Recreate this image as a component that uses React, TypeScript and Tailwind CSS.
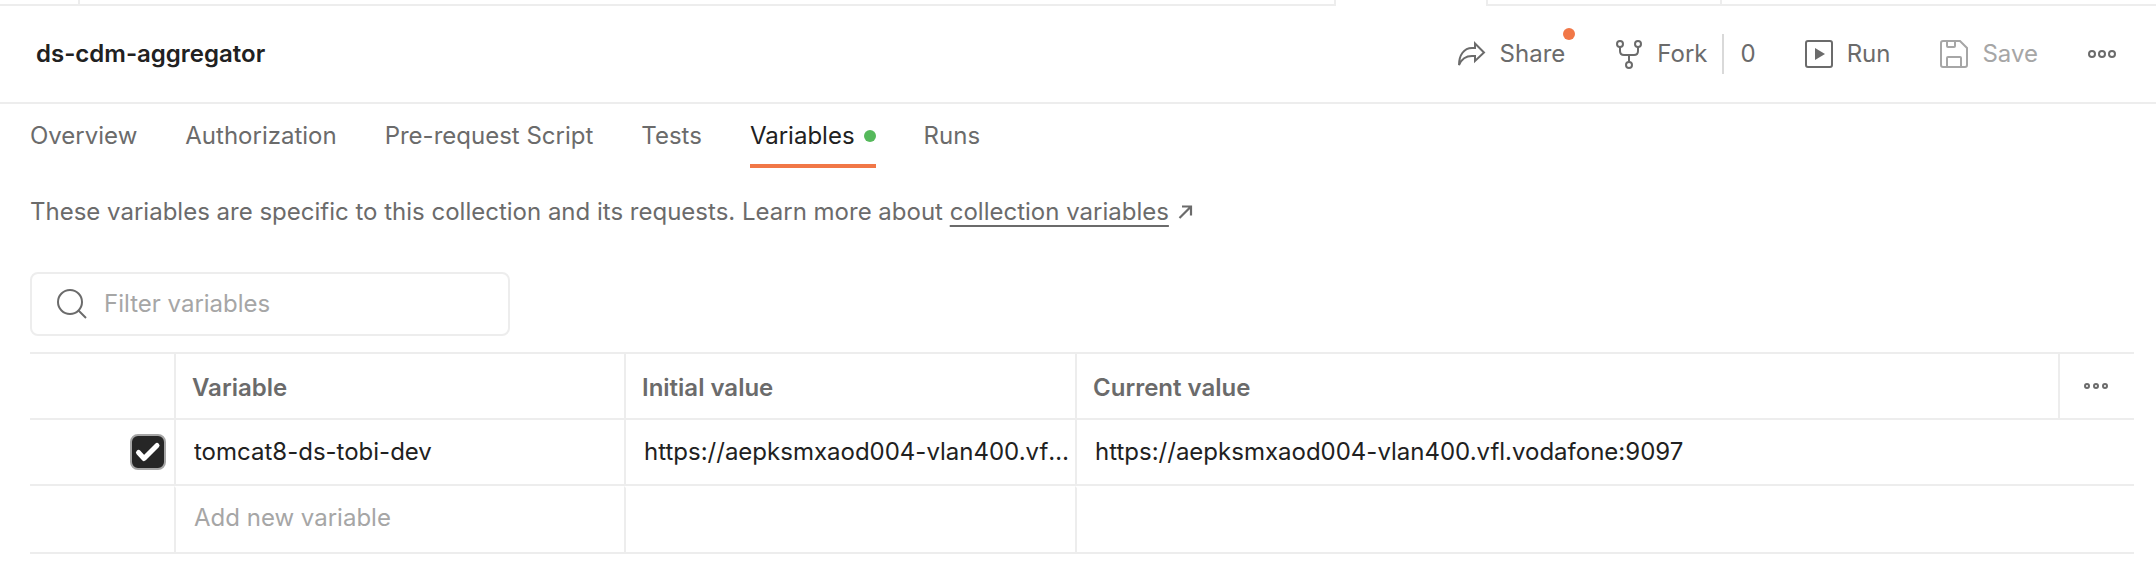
import React from "react";

const headCell = "border-l-2 border-b-2 border-[#ededed] h-[66px] px-4 pt-[3px] text-left font-semibold text-[#6b6b6b]";
const bodyCell = "border-l-2 border-b-2 border-[#ededed] h-[66px]";
const newCell = "border-l-2 border-b-2 border-t-2 border-[#ededed] border-t-white h-[68px] pb-[5px]";
const field = "block w-full truncate bg-transparent pl-[18px] pr-1 outline-none placeholder:text-[#a6a6a6]";

const tabs = ["Overview", "Authorization", "Pre-request Script", "Tests", "Variables", "Runs"];
const url = "https://aepksmxaod004-vlan400.vfl.vodafone:9097";

function ShareIcon() {
  return (
    <svg width="32" height="32" viewBox="0 0 32 32" fill="none" stroke="currentColor" strokeWidth="2">
      <path d="M19 5.500 L28 14.500 L19 23 V18 H16 C10 18 5.500 21 3 27 C3 17 8 10 16 10 H19 Z" />
    </svg>
  );
}

function ForkIcon() {
  return (
    <svg width="32" height="32" viewBox="0 0 32 32" fill="none" stroke="currentColor" strokeWidth="2">
      <circle cx="7" cy="6" r="3" />
      <circle cx="25" cy="6" r="3" />
      <circle cx="16" cy="27" r="3" />
      <path d="M7 9 V13 Q7 17 11 17 H21 Q25 17 25 13 V9 M16 17 V24" />
    </svg>
  );
}

function RunIcon() {
  return (
    <svg width="32" height="32" viewBox="0 0 32 32" fill="none" stroke="currentColor" strokeWidth="2">
      <rect x="3" y="3" width="26" height="26" rx="2" />
      <path d="M12 10 L22 16 L12 22 Z" fill="currentColor" stroke="none" />
    </svg>
  );
}

function SaveIcon() {
  return (
    <svg width="32" height="32" viewBox="0 0 32 32" fill="none" stroke="currentColor" strokeWidth="2">
      <path d="M5 3 H22 L29 10 V27 Q29 29 27 29 H5 Q3 29 3 27 V5 Q3 3 5 3 Z" />
      <path d="M9 3 V8 Q9 9 10 9 H16 Q17 9 17 8 V3 M9 29 V20 Q9 19 10 19 H22 Q23 19 23 20 V29" />
    </svg>
  );
}

function MoreIcon() {
  return (
    <svg width="32" height="32" viewBox="0 0 32 32" fill="none" stroke="currentColor" strokeWidth="2">
      <circle cx="6" cy="16" r="3" />
      <circle cx="16" cy="16" r="3" />
      <circle cx="26" cy="16" r="3" />
    </svg>
  );
}

function SmallMoreIcon() {
  return (
    <svg width="32" height="32" viewBox="0 0 32 32" fill="none" stroke="currentColor" strokeWidth="2">
      <circle cx="6" cy="16" r="2" />
      <circle cx="15" cy="16" r="2" />
      <circle cx="24" cy="16" r="2" />
    </svg>
  );
}

export default function App() {
  return (
    <div className="min-h-screen bg-white font-['Inter',sans-serif] text-2xl leading-8 text-[#6b6b6b]">
      <div className="flex h-[6px]">
        <div className="w-20 border-b-2 border-r-2 border-[#ededed]" />
        <div className="grow border-b-2 border-r-2 border-[#ededed]" />
        <div className="w-[150px]" />
        <div className="w-[236px] border-b-2 border-x-2 border-[#ededed]" />
        <div className="w-[434px] border-b-2 border-[#ededed]" />
      </div>

      <header className="flex h-[98px] items-center justify-between border-b-2 border-[#ededed] pl-9 pr-[38px]">
        <h1 className="font-semibold text-[#212121]">ds-cdm-aggregator</h1>
        <div className="flex items-center">
          <button className="relative flex items-center gap-3">
            <ShareIcon />
            Share
            <span className="absolute -right-[10px] -top-[10px] size-3 rounded-full bg-[#f17747]" />
          </button>
          <button className="ml-12 flex items-center gap-3">
            <ForkIcon />
            Fork
          </button>
          <span className="ml-[15px] h-10 w-[2px] bg-[#d9d9d9]" />
          <button className="ml-4">0</button>
          <button className="ml-[47px] flex items-center gap-3">
            <RunIcon />
            Run
          </button>
          <button className="ml-12 flex items-center gap-3 text-[#a6a6a6]">
            <SaveIcon />
            Save
          </button>
          <button aria-label="More actions" className="ml-12">
            <MoreIcon />
          </button>
        </div>
      </header>

      <nav className="flex gap-12 px-[30px]">
        {tabs.map((tab) =>
          tab === "Variables" ? (
            <a key={tab} href="#variables" className="flex h-16 items-center gap-[9px] border-b-4 border-[#f17747] pt-1 text-[#212121]">
              {tab}
              <span className="size-3 rounded-full bg-[#55b95b]" />
            </a>
          ) : (
            <a key={tab} href="#tab" className="flex h-16 items-center border-b-4 border-transparent pt-1">
              {tab}
            </a>
          ),
        )}
      </nav>

      <main className="pl-[30px] pr-[22px]">
        <p className="mt-7 flex items-center">
          <span>
            These variables are specific to this collection and its requests. Learn more about{" "}
            <a href="#docs" className="underline decoration-2 underline-offset-[5px]">collection variables</a>
          </span>
          <svg className="ml-2" width="20" height="20" viewBox="0 0 20 20" fill="none" stroke="currentColor" strokeWidth="2.200">
            <path d="M2.500 16 L14 4.500 M5 4.500 H14 V13.500" />
          </svg>
        </p>

        <label className="mt-11 flex h-16 w-[480px] items-center rounded-lg border-2 border-[#ededed] pl-6">
          <svg width="32" height="32" viewBox="0 0 32 32" fill="none" stroke="currentColor" strokeWidth="2">
            <circle cx="14" cy="14" r="12" />
            <path d="M22.500 22.500 L30 30" />
          </svg>
          <input
            type="text"
            aria-label="Filter variables"
            placeholder="Filter variables"
            className="ml-4 min-w-0 grow bg-transparent outline-none placeholder:text-[#a6a6a6]"
          />
        </label>

        <table className="mt-4 w-full table-fixed border-separate border-spacing-0 border-t-2 border-[#ededed]">
          <colgroup>
            <col className="w-36" />
            <col className="w-[450px]" />
            <col className="w-[451px]" />
            <col />
            <col className="w-[76px]" />
          </colgroup>
          <thead>
            <tr>
              <td className="h-[66px] border-b-2 border-[#ededed]" />
              <th scope="col" className={headCell}>Variable</th>
              <th scope="col" className={headCell}>Initial value</th>
              <th scope="col" className={headCell}>Current value</th>
              <th scope="col" className="h-[66px] border-b-2 border-l-2 border-[#ededed]">
                <button aria-label="Table options" className="flex w-full justify-center">
                  <SmallMoreIcon />
                </button>
              </th>
            </tr>
          </thead>
          <tbody className="text-[#212121]">
            <tr>
              <td className="h-[66px] border-b-2 border-[#ededed]">
                <div className="relative ml-auto mr-2 size-9">
                  <input
                    type="checkbox"
                    aria-label="Enable tomcat8-ds-tobi-dev"
                    defaultChecked
                    className="block size-9 appearance-none rounded-lg border-2 border-[#a6a6a6] bg-white checked:bg-[#262626]"
                  />
                  <svg className="pointer-events-none absolute inset-0" width="36" height="36" viewBox="0 0 36 36" fill="none" stroke="white" strokeWidth="5" strokeLinecap="round" strokeLinejoin="round">
                    <path d="M8.500 18.500 L14 24.500 L27 11.500" />
                  </svg>
                </div>
              </td>
              <td className={bodyCell}>
                <input aria-label="Variable" className={field} defaultValue="tomcat8-ds-tobi-dev" />
              </td>
              <td className={bodyCell}>
                <input aria-label="Initial value" className={field} defaultValue={url} />
              </td>
              <td colSpan={2} className={bodyCell}>
                <input aria-label="Current value" className={field} defaultValue={url} />
              </td>
            </tr>
            <tr>
              <td className="h-[68px] border-b-2 border-[#ededed]" />
              <td className={newCell}>
                <input aria-label="New variable" className={field} placeholder="Add new variable" />
              </td>
              <td className={newCell} />
              <td colSpan={2} className={newCell} />
            </tr>
          </tbody>
        </table>
      </main>
    </div>
  );
}
